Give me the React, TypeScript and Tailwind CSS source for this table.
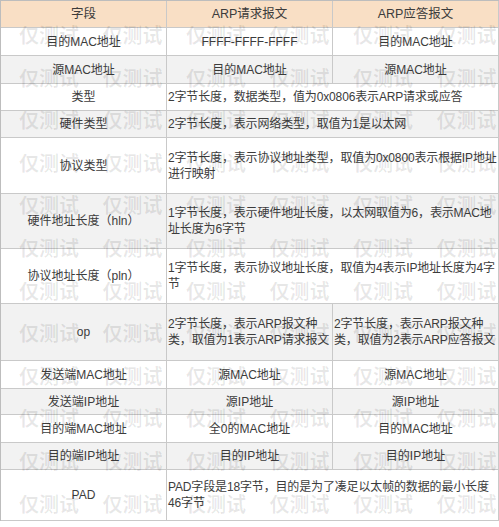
import React from "react";

type Cell = { t: React.ReactNode; span?: boolean; left?: boolean };
type Row = { h: number; cells: Cell[] };

const rows: Row[] = [
  { h: 28, cells: [{ t: "目的MAC地址" }, { t: "FFFF-FFFF-FFFF" }, { t: "目的MAC地址" }] },
  { h: 28, cells: [{ t: "源MAC地址" }, { t: "目的MAC地址" }, { t: "源MAC地址" }] },
  { h: 27, cells: [{ t: "类型" }, { t: "2字节长度，数据类型，值为0x0806表示ARP请求或应答", span: true, left: true }] },
  { h: 27, cells: [{ t: "硬件类型" }, { t: "2字节长度，表示网络类型，取值为1是以太网", span: true, left: true }] },
  {
    h: 56,
    cells: [
      { t: "协议类型" },
      { t: <>2字节长度，表示协议地址类型，取值为0x0800表示根据IP地址<br />进行映射</>, span: true, left: true },
    ],
  },
  {
    h: 55,
    cells: [
      { t: "硬件地址长度（hln）" },
      { t: <>1字节长度，表示硬件地址长度，以太网取值为6，表示MAC地<br />址长度为6字节</>, span: true, left: true },
    ],
  },
  {
    h: 55,
    cells: [
      { t: "协议地址长度（pln）" },
      { t: <>1字节长度，表示协议地址长度，取值为4表示IP地址长度为4字<br />节</>, span: true, left: true },
    ],
  },
  {
    h: 57,
    cells: [
      { t: "op" },
      { t: <>2字节长度，表示ARP报文种<br />类，取值为1表示ARP请求报文</>, left: true },
      { t: <>2字节长度，表示ARP报文种<br />类，取值为2表示ARP应答报文</>, left: true },
    ],
  },
  { h: 28, cells: [{ t: "发送端MAC地址" }, { t: "源MAC地址" }, { t: "源MAC地址" }] },
  { h: 26, cells: [{ t: "发送端IP地址" }, { t: "源IP地址" }, { t: "源IP地址" }] },
  { h: 28, cells: [{ t: "目的端MAC地址" }, { t: "全0的MAC地址" }, { t: "目的MAC地址" }] },
  { h: 27, cells: [{ t: "目的端IP地址" }, { t: "目的IP地址" }, { t: "目的IP地址" }] },
  {
    h: 51,
    cells: [
      { t: "PAD" },
      { t: <>PAD字段是18字节，目的是为了凑足以太帧的数据的最小长度<br />46字节</>, span: true, left: true },
    ],
  },
];

const FONT = '"Liberation Sans", "Noto Sans CJK SC", Arial, sans-serif';

export default function App() {
  const wm = Array.from({ length: 72 });
  return (
    <div className="relative w-[499px] h-[527px] bg-white overflow-hidden" style={{ fontFamily: FONT }}>
      <div className="w-[499px] border-l border-t border-[#bdbdbd] text-[12px] leading-[16px] text-[#3c3c3c]">
        <div className="grid grid-cols-[166px_166px_166px] h-[27px] bg-[#f9dfc5]">
          {["字段", "ARP请求报文", "ARP应答报文"].map((h) => (
            <div key={h} className="flex items-center justify-center border-r border-b border-[#c9c9c9] text-[12.5px]">
              {h}
            </div>
          ))}
        </div>
        {rows.map((r, i) => (
          <div
            key={i}
            className={`grid grid-cols-[166px_166px_166px] ${i % 2 === 1 ? "bg-[#f2f2f2]" : "bg-white"}`}
            style={{ height: r.h }}
          >
            {r.cells.map((c, j) => (
              <div
                key={j}
                className={`flex items-center border-r border-b border-[#c9c9c9] whitespace-nowrap overflow-hidden ${
                  c.span ? "col-span-2" : ""
                } ${c.left ? "justify-start pl-[1px] text-left tracking-[-0.15px]" : "justify-center text-center"}`}
              >
                <span>{c.t}</span>
              </div>
            ))}
          </div>
        ))}
      </div>
      <div className="pointer-events-none absolute left-[19px] top-[24px] grid grid-cols-[repeat(6,83.5px)] auto-rows-[42.6px]">
        {wm.map((_, k) => (
          <div
            key={k}
            className="text-[20px] leading-[22px] font-bold text-[rgba(0,0,0,0.09)] whitespace-nowrap"
            style={{ fontFamily: '"Noto Sans CJK SC", sans-serif' }}
          >
            仅测试
          </div>
        ))}
      </div>
    </div>
  );
}
